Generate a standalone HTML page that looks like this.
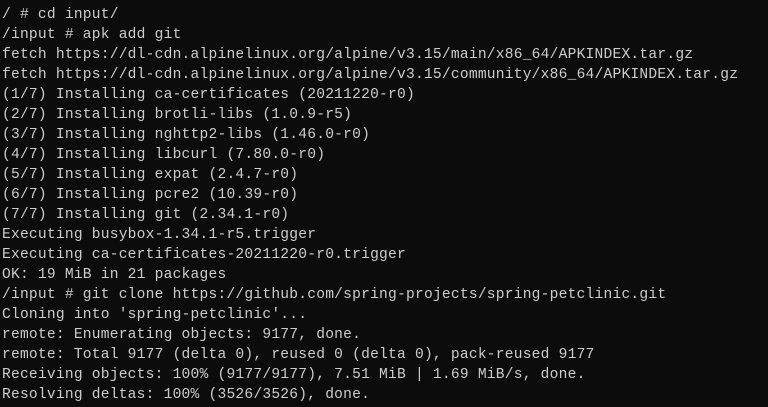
<!DOCTYPE html>
<html><head><style>
html,body{margin:0;padding:0;background:#0c0c0c;width:768px;height:407px;overflow:hidden}
pre{margin:0;position:absolute;left:2px;top:5px;font-family:"Liberation Mono",monospace;font-size:14.6px;letter-spacing:0.22px;line-height:20px;color:#cccccc}
</style></head><body><pre>/ # cd input/
/input # apk add git
fetch https://dl-cdn.alpinelinux.org/alpine/v3.15/main/x86_64/APKINDEX.tar.gz
fetch https://dl-cdn.alpinelinux.org/alpine/v3.15/community/x86_64/APKINDEX.tar.gz
(1/7) Installing ca-certificates (20211220-r0)
(2/7) Installing brotli-libs (1.0.9-r5)
(3/7) Installing nghttp2-libs (1.46.0-r0)
(4/7) Installing libcurl (7.80.0-r0)
(5/7) Installing expat (2.4.7-r0)
(6/7) Installing pcre2 (10.39-r0)
(7/7) Installing git (2.34.1-r0)
Executing busybox-1.34.1-r5.trigger
Executing ca-certificates-20211220-r0.trigger
OK: 19 MiB in 21 packages
/input # git clone https://github.com/spring-projects/spring-petclinic.git
Cloning into 'spring-petclinic'...
remote: Enumerating objects: 9177, done.
remote: Total 9177 (delta 0), reused 0 (delta 0), pack-reused 9177
Receiving objects: 100% (9177/9177), 7.51 MiB | 1.69 MiB/s, done.
Resolving deltas: 100% (3526/3526), done.</pre></body></html>
